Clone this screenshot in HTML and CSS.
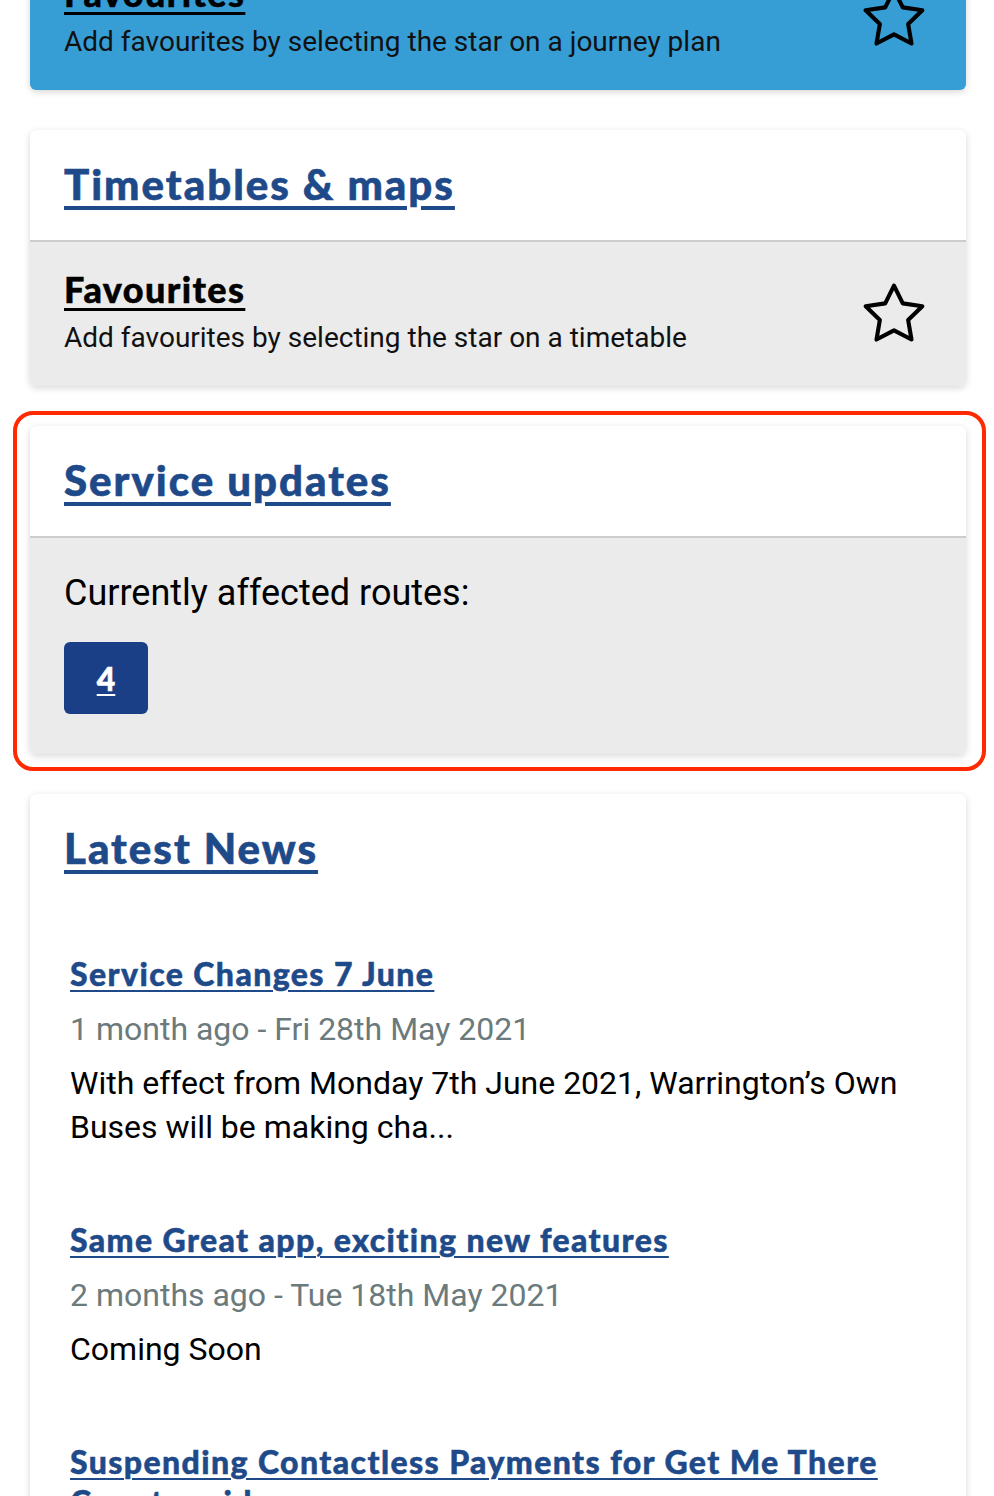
FILE: index.html
```html
<!DOCTYPE html>
<html lang="en">
<head>
<meta charset="utf-8">
<title>Home</title>
<link rel="stylesheet" href="styles.css">
</head>
<body>
<main class="page">
  <section class="card">
    <div class="fav fav-blue">
      <div class="fav-text">
        <a class="fav-title" href="#">Favourites</a>
        <p class="fav-sub">Add favourites by selecting the star on a journey plan</p>
      </div>
      <svg class="star" viewBox="0 0 24 24" width="68" height="68" aria-hidden="true"><polygon points="12 2 15.09 8.26 22 9.27 17 14.14 18.18 21.02 12 17.77 5.82 21.02 7 14.14 2 9.27 8.91 8.26 12 2"/></svg>
    </div>
  </section>

  <section class="card">
    <div class="card-head"><a class="card-title" href="#">Timetables &amp; maps</a></div>
    <div class="fav fav-grey">
      <div class="fav-text">
        <a class="fav-title" href="#">Favourites</a>
        <p class="fav-sub">Add favourites by selecting the star on a timetable</p>
      </div>
      <svg class="star" viewBox="0 0 24 24" width="68" height="68" aria-hidden="true"><polygon points="12 2 15.09 8.26 22 9.27 17 14.14 18.18 21.02 12 17.77 5.82 21.02 7 14.14 2 9.27 8.91 8.26 12 2"/></svg>
    </div>
  </section>

  <div class="highlight-wrap">
    <section class="card">
      <div class="card-head"><a class="card-title" href="#">Service updates</a></div>
      <div class="updates">
        <p class="updates-label">Currently affected routes:</p>
        <div class="routes"><a class="route" href="#">4</a></div>
      </div>
    </section>
    <div class="highlight"></div>
  </div>

  <section class="card card-news">
    <div class="card-head"><a class="card-title" href="#">Latest News</a></div>
    <ul class="news">
      <li class="news-item">
        <a class="news-title" href="#">Service Changes 7 June</a>
        <p class="news-date">1 month ago - Fri 28th May 2021</p>
        <p class="news-body">With effect from Monday 7th June 2021, Warrington’s Own Buses will be making cha...</p>
      </li>
      <li class="news-item">
        <a class="news-title" href="#">Same Great app, exciting new features</a>
        <p class="news-date">2 months ago - Tue 18th May 2021</p>
        <p class="news-body">Coming Soon</p>
      </li>
      <li class="news-item">
        <a class="news-title" href="#">Suspending Contactless Payments for Get Me There Countrywide</a>
        <p class="news-date">2 months ago - Mon 10th May 2021</p>
        <p class="news-body">Contactless payments will be suspended...</p>
      </li>
    </ul>
  </section>
</main>
</body>
</html>
```

FILE: styles.css
```css
html, body {
  margin: 0;
  padding: 0;
  background: #ffffff;
}

body {
  font-family: Roboto, "Liberation Sans", sans-serif;
  color: #111111;
  overflow: hidden;
  height: 1496px;
}

p { margin: 0; }

.page {
  width: 936px;
  margin: -54px 0 0 30px;
  display: flex;
  flex-direction: column;
  gap: 40px;
}

.card {
  background: #ffffff;
  border-radius: 6px;
  overflow: hidden;
  box-shadow: 0 2px 7px rgba(0, 0, 0, 0.16);
}

.card-head {
  height: 110px;
  box-sizing: border-box;
  padding: 30px 34px 0;
  font-family: Lato, "Open Sans", sans-serif;
  font-weight: 900;
  font-size: 42px;
  line-height: 48px;
}

.card-title {
  color: #1f4a8a;
  letter-spacing: 2px;
  -webkit-text-stroke: 0.6px #1f4a8a;
  text-decoration: underline;
  text-decoration-thickness: 4px;
  text-underline-offset: 6px;
}

.fav {
  display: flex;
  align-items: center;
  justify-content: space-between;
  height: 144px;
  box-sizing: border-box;
  padding: 0 38px 0 34px;
}

.fav-blue { background: #369dd5; }

.fav-grey {
  background: #ebebeb;
  border-top: 2px solid #cdcdcd;
  height: 146px;
}

.fav-text {
  display: flex;
  flex-direction: column;
  padding: 25px 0 31px;
}

.fav-title {
  font-family: Lato, "Open Sans", sans-serif;
  font-weight: 900;
  font-size: 36px;
  line-height: 44px;
  letter-spacing: 1.4px;
  -webkit-text-stroke: 0.5px #000000;
  color: #000000;
  text-decoration: underline;
  text-decoration-thickness: 3px;
  text-underline-offset: 5px;
  align-self: flex-start;
}

.fav-sub {
  font-size: 28px;
  line-height: 34px;
  margin-top: 10px;
  color: #111111;
}

.star {
  fill: none;
  stroke: #000000;
  stroke-width: 1.45;
  stroke-linejoin: round;
  stroke-linecap: round;
  flex: none;
}

.highlight-wrap {
  position: relative;
}

.highlight {
  position: absolute;
  top: -15px;
  left: -17px;
  right: -20px;
  bottom: -17px;
  border: 4px solid #ff2a00;
  border-radius: 20px;
  pointer-events: none;
}

.updates {
  background: #ebebeb;
  border-top: 2px solid #cdcdcd;
  padding: 35px 34px 40px;
}

.updates-label {
  font-size: 36px;
  line-height: 40px;
  color: #000000;
}

.routes {
  display: flex;
  margin-top: 29px;
}

.route {
  display: flex;
  align-items: center;
  justify-content: center;
  width: 84px;
  height: 72px;
  border-radius: 6px;
  background: #1a3f87;
  color: #ffffff;
  font-family: Lato, "Open Sans", sans-serif;
  font-weight: 900;
  font-size: 32px;
  -webkit-text-stroke: 0.5px #ffffff;
  text-decoration: underline;
  text-decoration-thickness: 2px;
  text-underline-offset: 3px;
}

.card-news {
  min-height: 800px;
}

.news {
  list-style: none;
  margin: 0;
  padding: 50px 40px 0;
  display: flex;
  flex-direction: column;
  gap: 71px;
}

.news-item {
  display: flex;
  flex-direction: column;
}

.news-title {
  font-family: Lato, "Open Sans", sans-serif;
  font-weight: 900;
  font-size: 32px;
  line-height: 40px;
  letter-spacing: 1.4px;
  -webkit-text-stroke: 0.5px #1f4a8a;
  color: #1f4a8a;
  text-decoration: underline;
  text-decoration-thickness: 2px;
  text-underline-offset: 4px;
  align-self: flex-start;
}

.news-date {
  font-size: 32px;
  line-height: 44px;
  color: #6b7a7c;
  margin-top: 13px;
}

.news-body {
  font-size: 32px;
  line-height: 44px;
  color: #000000;
  margin-top: 10px;
}
```
